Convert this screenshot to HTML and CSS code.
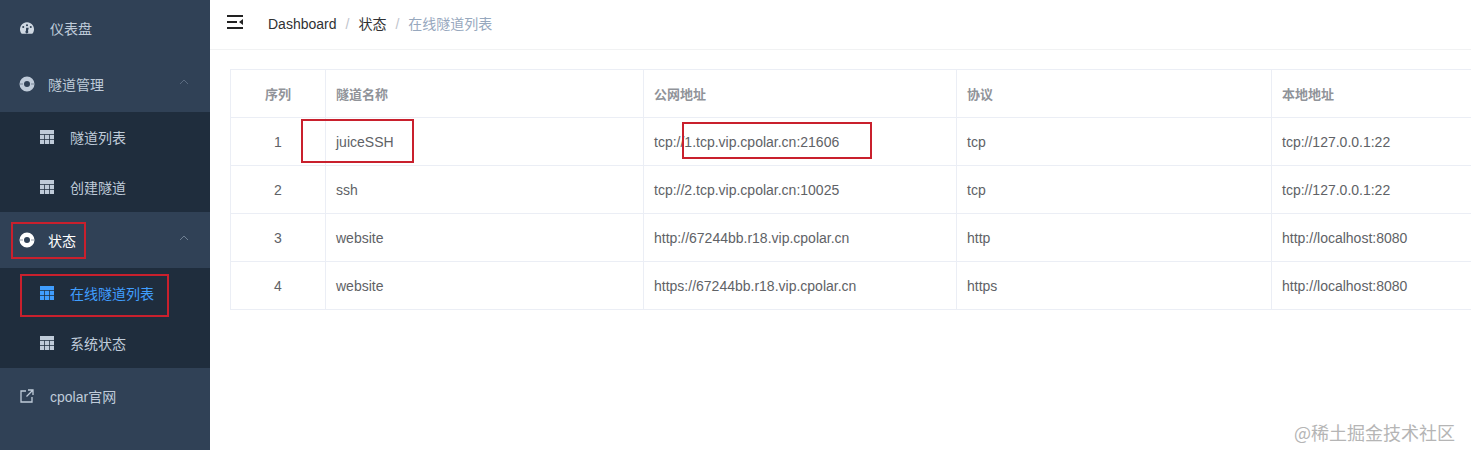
FILE: index.html
```html
<!DOCTYPE html>
<html lang="en">
<head>
  <meta charset="UTF-8" />
  <title>在线隧道列表</title>
  <link rel="stylesheet" href="styles.css">
</head>
<body>
  <svg class="defs" width="0" height="0">
    <symbol id="i-table" viewBox="0 0 14 14">
      <path fill="currentColor" d="M0 0h14v14H0z"/>
      <path fill="none" stroke="#1f2d3d" stroke-width="1" d="M0 4.5h14M0 9.5h14M4.5 4.5V14M9.5 4.5V14" opacity=".75"/>
    </symbol>
    <symbol id="i-ring" viewBox="0 0 16 16">
      <path fill="currentColor" fill-rule="evenodd" d="M8 .5a7.500 7.500 0 1 1 0 15 7.500 7.500 0 0 1 0-15zM8 5a3 3 0 1 0 0 6 3 3 0 0 0 0-6z"/>
      <path stroke="#304156" stroke-width="1.2" d="M1 8h3M12 8h3" opacity=".5"/>
    </symbol>
  </svg>

  <aside class="sidebar">
    <a class="menu-item">
      <svg class="icon-gauge" viewBox="0 0 16 14"><path fill="currentColor" fill-rule="evenodd" d="M8 0a8 8 0 0 1 7 11.900c-.3.600-.8 1.100-1.500 1.100h-11c-.7 0-1.200-.5-1.500-1.100A8 8 0 0 1 8 0zM8 2.100a1.200 1.200 0 1 0 0 2.400 1.200 1.200 0 0 0 0-2.400zM3.700 4a1.200 1.200 0 1 0 0 2.400 1.200 1.200 0 0 0 0-2.400zM12.300 4a1.200 1.200 0 1 0 0 2.400 1.200 1.200 0 0 0 0-2.400zM7 6l-.2 3.700a1.600 1.600 0 1 0 2.300.2L10 6z"/></svg>
      <span class="menu-label">仪表盘</span>
    </a>

    <a class="menu-item menu-parent">
      <svg class="icon-ring"><use href="#i-ring"/></svg>
      <span>隧道管理</span>
      <svg class="chevron" viewBox="0 0 10 6"><path d="M1 5l4-4 4 4"/></svg>
    </a>
    <div class="submenu">
      <a class="sub-item"><svg class="icon-table"><use href="#i-table"/></svg><span>隧道列表</span></a>
      <a class="sub-item"><svg class="icon-table"><use href="#i-table"/></svg><span>创建隧道</span></a>
    </div>

    <a class="menu-item menu-parent is-open">
      <svg class="icon-ring"><use href="#i-ring"/></svg>
      <span>状态</span>
      <svg class="chevron" viewBox="0 0 10 6"><path d="M1 5l4-4 4 4"/></svg>
    </a>
    <div class="submenu">
      <a class="sub-item is-active"><svg class="icon-table"><use href="#i-table"/></svg><span>在线隧道列表</span></a>
      <a class="sub-item"><svg class="icon-table"><use href="#i-table"/></svg><span>系统状态</span></a>
    </div>

    <a class="menu-item">
      <svg class="icon-link" viewBox="0 0 14 14"><path d="M6 2H1v11h11V8M8 1h5v5M13 1L6.500 7.500"/></svg>
      <span class="menu-label">cpolar官网</span>
    </a>
  </aside>

  <main class="main">
    <header class="navbar">
      <svg class="hamburger" viewBox="0 0 16 14"><path d="M0 0h16v2H0zM0 6h10v2H0zM0 12h16v2H0zM16 4v6l-4-3z"/></svg>
      <nav class="breadcrumb">
        <span>Dashboard</span><i>/</i><span>状态</span><i>/</i><span class="current">在线隧道列表</span>
      </nav>
    </header>

    <section class="content">
      <table class="tunnel-table">
        <thead>
          <tr>
            <th class="col-index">序列</th>
            <th class="col-name">隧道名称</th>
            <th class="col-url">公网地址</th>
            <th class="col-proto">协议</th>
            <th class="col-local">本地地址</th>
          </tr>
        </thead>
        <tbody>
          <tr><td class="col-index">1</td><td>juiceSSH</td><td>tcp://1.tcp.vip.cpolar.cn:21606</td><td>tcp</td><td>tcp://127.0.0.1:22</td></tr>
          <tr><td class="col-index">2</td><td>ssh</td><td>tcp://2.tcp.vip.cpolar.cn:10025</td><td>tcp</td><td>tcp://127.0.0.1:22</td></tr>
          <tr><td class="col-index">3</td><td>website</td><td>http://67244bb.r18.vip.cpolar.cn</td><td>http</td><td>http://localhost:8080</td></tr>
          <tr><td class="col-index">4</td><td>website</td><td>https://67244bb.r18.vip.cpolar.cn</td><td>https</td><td>http://localhost:8080</td></tr>
        </tbody>
      </table>
    </section>
  </main>

  <!-- annotations drawn over the screenshot -->
  <div class="mark mark-status"></div>
  <div class="mark mark-online"></div>
  <div class="mark mark-name"></div>
  <div class="mark mark-url"></div>
  <div class="watermark">@稀土掘金技术社区</div>
</body>
</html>
```

FILE: styles.css
```css
* {
  box-sizing: border-box;
}

html, body {
  height: 100%;
}

body {
  margin: 0;
  display: flex;
  overflow: hidden;
  position: relative;
  font-family: "Liberation Sans", "Noto Sans CJK SC", sans-serif;
  font-size: 14px;
  color: #606266;
  background: #fff;
}

.defs {
  position: absolute;
}

/* Sidebar */
.sidebar {
  flex: 0 0 210px;
  width: 210px;
  background: #304156;
  color: #bfcbd9;
}

.menu-item {
  display: flex;
  align-items: center;
  height: 56px;
  padding-left: 20px;
}

.menu-parent {
  position: relative;
  padding-left: 19px;
}

.menu-parent span {
  margin-left: 13px;
}

.menu-label {
  margin-left: 16px;
}

.menu-parent.is-open {
  color: #fff;
}

.menu-parent.is-open .chevron {
  stroke: #6f7f92;
}

.icon-gauge {
  width: 14px;
  height: 13px;
  color: #cfd8e2;
}

.icon-ring {
  width: 16px;
  height: 16px;
}

.chevron {
  position: absolute;
  right: 21px;
  top: 23px;
  width: 10px;
  height: 6px;
  fill: none;
  stroke: #5b6b80;
  stroke-width: 1;
}

.icon-link {
  width: 14px;
  height: 14px;
  fill: none;
  stroke: #bfcbd9;
  stroke-width: 1.300;
}

.submenu {
  background: #1f2d3d;
}

.sub-item {
  display: flex;
  align-items: center;
  height: 50px;
  padding-left: 40px;
}

.sub-item span {
  margin-left: 16px;
}

.icon-table {
  width: 14px;
  height: 14px;
  flex: none;
}

.sub-item.is-active {
  color: #409eff;
}

/* Main */
.main {
  flex: 1;
  min-width: 0;
}

.navbar {
  display: flex;
  align-items: center;
  height: 50px;
  padding-left: 17px;
  border-bottom: 1px solid #f1f2f3;
}

.hamburger {
  width: 16px;
  height: 14px;
  margin-top: -5px;
  fill: #222;
}

.breadcrumb {
  margin-left: 25px;
  margin-top: -3px;
  color: #303133;
}

.breadcrumb i {
  margin: 0 9px;
  font-style: normal;
  color: #c0c4cc;
}

.breadcrumb .current {
  color: #97a8be;
}

.content {
  padding: 19px 0 0 20px;
}

.tunnel-table {
  border-collapse: collapse;
  table-layout: fixed;
  width: 1300px;
}

.tunnel-table th,
.tunnel-table td {
  height: 48px;
  padding: 0 10px;
  border: 1px solid #ebeef5;
  text-align: left;
  font-size: 14px;
  font-weight: 400;
}

.tunnel-table th {
  font-weight: 700;
  font-size: 13px;
  color: #909399;
}

.tunnel-table .col-index {
  text-align: center;
}

.col-index { width: 95px; }
.col-name { width: 318px; }
.col-url { width: 313px; }
.col-proto { width: 315px; }
.col-local { width: 259px; }

/* Red annotation boxes */
.mark {
  position: absolute;
  border: 2px solid #c9202d;
}

.mark-status { left: 11px; top: 222px; width: 75px; height: 37px; }
.mark-online { left: 20px; top: 274px; width: 149px; height: 43px; }
.mark-name { left: 301px; top: 119px; width: 113px; height: 44px; }
.mark-url { left: 682px; top: 122px; width: 190px; height: 37px; }

.watermark {
  position: absolute;
  right: 16px;
  bottom: 6px;
  font-family: "Noto Sans CJK SC", sans-serif;
  font-size: 18px;
  line-height: 24px;
  color: #b5b5b5;
}
```
